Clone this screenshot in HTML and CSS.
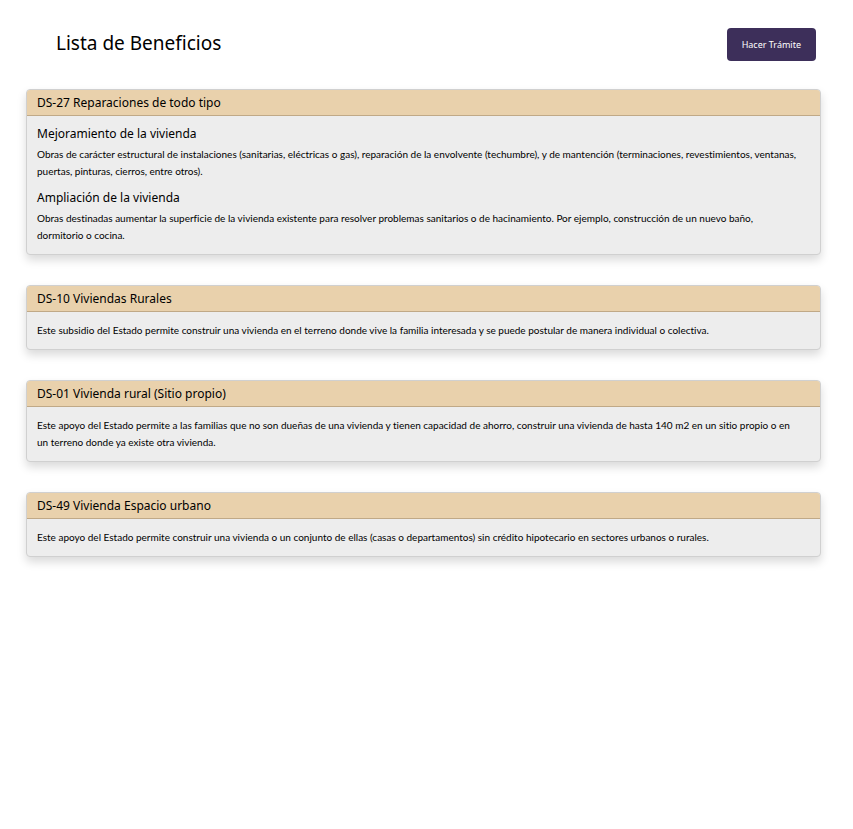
FILE: index.html
```html
<!DOCTYPE html>
<html lang="es">
<head>
<meta charset="utf-8">
<meta name="viewport" content="width=device-width, initial-scale=1">
<title>Lista de Beneficios</title>
<link rel="stylesheet" href="styles.css">
</head>
<body>
<main class="page">
  <header class="page-header">
    <h1 class="page-title">Lista de Beneficios</h1>
    <button class="btn" type="button">Hacer Trámite</button>
  </header>
  <div class="card-list">
    <article class="card">
      <h2 class="card-header">DS-27 Reparaciones de todo tipo</h2>
      <div class="card-body">
        <h3 class="card-title">Mejoramiento de la vivienda</h3>
        <p class="card-text">Obras de carácter estructural de instalaciones (sanitarias, eléctricas o gas), reparación de la envolvente (techumbre), y de mantención (terminaciones, revestimientos, ventanas, puertas, pinturas, cierros, entre otros).</p>
        <h3 class="card-title">Ampliación de la vivienda</h3>
        <p class="card-text">Obras destinadas aumentar la superficie de la vivienda existente para resolver problemas sanitarios o de hacinamiento. Por ejemplo, construcción de un nuevo baño, dormitorio o cocina.</p>
      </div>
    </article>
    <article class="card">
      <h2 class="card-header">DS-10 Viviendas Rurales</h2>
      <div class="card-body">
        <p class="card-text">Este subsidio del Estado permite construir una vivienda en el terreno donde vive la familia interesada y se puede postular de manera individual o colectiva.</p>
      </div>
    </article>
    <article class="card">
      <h2 class="card-header">DS-01 Vivienda rural (Sitio propio)</h2>
      <div class="card-body">
        <p class="card-text">Este apoyo del Estado permite a las familias que no son dueñas de una vivienda y tienen capacidad de ahorro, construir una vivienda de hasta 140 m2 en un sitio propio o en un terreno donde ya existe otra vivienda.</p>
      </div>
    </article>
    <article class="card">
      <h2 class="card-header">DS-49 Vivienda Espacio urbano</h2>
      <div class="card-body">
        <p class="card-text">Este apoyo del Estado permite construir una vivienda o un conjunto de ellas (casas o departamentos) sin crédito hipotecario en sectores urbanos o rurales.</p>
      </div>
    </article>
  </div>
</main>
</body>
</html>
```
FILE: styles.css
```css
* {
  box-sizing: border-box;
}

body {
  margin: 0;
  background: #fff;
  color: #000;
  font-family: "Noto Sans", "Open Sans", sans-serif;
}

h1, h2, h3, p {
  margin: 0;
}

.page {
  padding: 28px 32px 28px 26px;
}

.page-header {
  display: flex;
  align-items: flex-start;
  justify-content: space-between;
  margin-bottom: 28px;
  padding: 0 5px 0 30px;
}

.page-title {
  font-size: 19px;
  font-weight: 400;
  line-height: 30px;
}

.btn {
  padding: 0 15px;
  border: 0;
  border-radius: 4px;
  background: #3d2f5a;
  color: #fff;
  font-family: "Noto Sans", "Open Sans", sans-serif;
  font-size: 9px;
  line-height: 33px;
}

.card-list {
  display: grid;
  gap: 30px;
}

.card {
  border: 1px solid #d0d0d0;
  border-radius: 4px;
  background: #ededed;
  box-shadow: 0 5px 10px rgba(0, 0, 0, 0.15);
}

.card-header {
  padding: 0 10px;
  border-bottom: 1px solid #c0a987;
  border-radius: 3px 3px 0 0;
  background: #e9d1ac;
  font-size: 12px;
  font-weight: 400;
  line-height: 25px;
}

.card-body {
  padding: 10px 20px 10px 10px;
}

.card-title {
  margin-bottom: 4px;
  font-size: 12px;
  font-weight: 400;
  line-height: 16px;
}

.card-text {
  font-family: Lato, "Noto Sans", sans-serif;
  font-size: 10px;
  font-variant-ligatures: none;
  line-height: 17px;
}

.card-text + .card-title {
  margin-top: 10px;
}
```
